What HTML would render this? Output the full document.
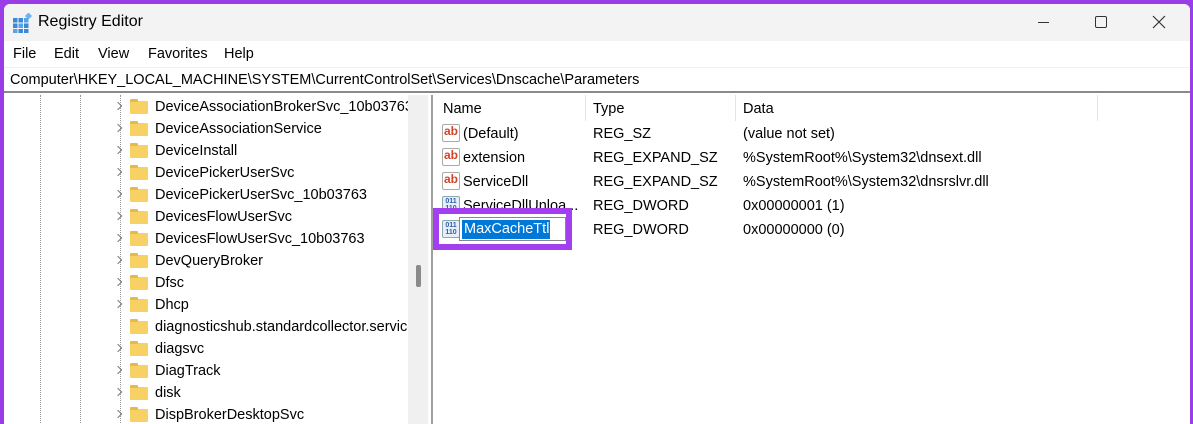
<!DOCTYPE html>
<html><head><style>
*{margin:0;padding:0;box-sizing:border-box}
body{width:1193px;height:417px;overflow:hidden;background:#9b3de6;font-family:"Liberation Sans",sans-serif;font-size:14.5px;color:#000;position:relative}
.win{position:absolute;left:4px;top:4px;width:1186px;height:420px;background:#fff;border-radius:6px 6px 0 0;overflow:hidden}
.title{position:absolute;left:0;top:0;width:100%;height:37px;background:#f3f3f3}
.abs{position:absolute;white-space:nowrap}
.menu{position:absolute;top:37px;left:0;width:100%;height:26px;background:#fff}
.addr{position:absolute;top:63px;left:0;width:100%;height:26px;background:#fff;border-top:1px solid #f0f0f0;border-bottom:2px solid #8a8a8a}
.row{position:absolute;height:22px;line-height:22px;white-space:nowrap}
.fold{position:absolute;left:126px;width:18px;height:13px;background:#f8d164;border-radius:1px}
.fold:before{content:"";position:absolute;left:0;top:-2px;width:8px;height:3px;background:#e8b84a;border-radius:1px 1px 0 0}
.chev{position:absolute;left:111px;width:6px;height:6px;border-right:1.3px solid #777;border-top:1.3px solid #777;transform:rotate(45deg)}
.dot{position:absolute;border-left:1px dotted #999}
.ab{position:absolute;left:438px;width:18px;height:18px;background:#fff;border:1px solid #aaa;border-radius:2px}
.ab span{position:absolute;left:1px;top:-1px;color:#d2452a;font-weight:bold;font-size:12px;line-height:15px}
.bin{position:absolute;left:438px;width:18px;height:18px;background:#e8eef8;border:1px solid #8aa;border-radius:2px;font-size:7px;line-height:7px;color:#2a5fb0;font-weight:bold;text-align:center;padding-top:1px}
</style></head><body>
<div class="win">
<div class="title">
 <svg class="abs" style="left:9px;top:9px" width="20" height="20" viewBox="0 0 20 20">
  <rect x="0" y="5" width="4.5" height="4.5" fill="#3a8ad6"/><rect x="5.5" y="5" width="4.5" height="4.5" fill="#3a8ad6"/><rect x="11" y="5" width="4.5" height="4.5" fill="#5aa3e6"/>
  <rect x="0" y="10.5" width="4.5" height="4.5" fill="#3a8ad6"/><rect x="5.5" y="10.5" width="4.5" height="4.5" fill="#5aa3e6"/><rect x="11" y="10.5" width="4.5" height="4.5" fill="#3a8ad6"/>
  <rect x="0" y="16" width="4.5" height="4" fill="#5aa3e6"/><rect x="5.5" y="16" width="4.5" height="4" fill="#3a8ad6"/><rect x="11" y="16" width="4.5" height="4" fill="#3a8ad6"/>
  <rect x="13" y="0.5" width="5" height="5" fill="#6cb6f0" transform="rotate(45 15.5 3)"/>
 </svg>
 <div class="abs" style="left:34px;top:9px;font-size:16px">Registry Editor</div>
 <div class="abs" style="left:1034px;top:18px;width:11px;height:1px;background:#333"></div>
 <div class="abs" style="left:1091px;top:12px;width:12px;height:12px;border:1.3px solid #333;border-radius:2px"></div>
 <svg class="abs" style="left:1148px;top:11px" width="14" height="14"><path d="M1 1L13 13M13 1L1 13" stroke="#333" stroke-width="1.2"/></svg>
</div>
<div class="menu">
 <div class="abs" style="left:9px;top:5px">File</div>
 <div class="abs" style="left:50px;top:5px">Edit</div>
 <div class="abs" style="left:94px;top:5px">View</div>
 <div class="abs" style="left:144px;top:5px">Favorites</div>
 <div class="abs" style="left:220px;top:5px">Help</div>
</div>
<div class="addr"><div class="abs" style="left:6px;top:4px">Computer\HKEY_LOCAL_MACHINE\SYSTEM\CurrentControlSet\Services\Dnscache\Parameters</div></div>
<div class="abs" style="left:0;top:91px;width:404px;height:330px;overflow:hidden">
 <div class="dot" style="left:36px;top:0;height:330px"></div>
 <div class="dot" style="left:76px;top:0;height:330px"></div>
 <div class="dot" style="left:116px;top:0;height:330px"></div>
</div>
<div class="abs" style="left:404px;top:91px;width:20px;height:330px;background:#f0f0f0"></div>
<div class="abs" style="left:412px;top:261px;width:5px;height:22px;background:#8a8a8a;border-radius:2px"></div>
<div class="abs" style="left:427px;top:91px;width:2px;height:330px;background:#a0a0a0"></div>
<div id="tree"></div>
<div class="abs" style="left:439px;top:97px">Name</div>
<div class="abs" style="left:581px;top:91px;width:1px;height:26px;background:#e5e5e5"></div>
<div class="abs" style="left:589px;top:97px">Type</div>
<div class="abs" style="left:731px;top:91px;width:1px;height:26px;background:#e5e5e5"></div>
<div class="abs" style="left:739px;top:97px">Data</div>
<div class="abs" style="left:1093px;top:91px;width:1px;height:26px;background:#e5e5e5"></div>

<div class="ab" style="top:120px"><span>ab</span></div><div class="abs" style="left:459px;top:122px">(Default)</div><div class="abs" style="left:589px;top:122px">REG_SZ</div><div class="abs" style="left:739px;top:122px">(value not set)</div>
<div class="ab" style="top:144px"><span>ab</span></div><div class="abs" style="left:459px;top:146px">extension</div><div class="abs" style="left:589px;top:146px">REG_EXPAND_SZ</div><div class="abs" style="left:739px;top:146px">%SystemRoot%\System32\dnsext.dll</div>
<div class="ab" style="top:168px"><span>ab</span></div><div class="abs" style="left:459px;top:170px">ServiceDll</div><div class="abs" style="left:589px;top:170px">REG_EXPAND_SZ</div><div class="abs" style="left:739px;top:170px">%SystemRoot%\System32\dnsrslvr.dll</div>
<div class="bin" style="top:192px">011<br>110</div><div class="abs" style="left:459px;top:194px">ServiceDllUnloa...</div><div class="abs" style="left:589px;top:194px">REG_DWORD</div><div class="abs" style="left:739px;top:194px">0x00000001 (1)</div>
<div class="abs" style="left:429px;top:204px;width:139px;height:42px;background:#a43ff0"></div>
<div class="abs" style="left:435px;top:210px;width:127px;height:30px;background:#fff"></div>
<div class="bin" style="top:216px">011<br>110</div>
<div class="abs" style="left:455px;top:213px;width:107px;height:24px;border:1px solid #888;background:#fff"></div>
<div class="abs" style="left:458px;top:216px;width:88px;height:19px;background:#0078d7;color:#fff;line-height:19px;padding-left:2px">MaxCacheTtl</div>
<div class="abs" style="left:589px;top:218px">REG_DWORD</div><div class="abs" style="left:739px;top:218px">0x00000000 (0)</div>
</div>
<script>
var items=["DeviceAssociationBrokerSvc_10b03763","DeviceAssociationService","DeviceInstall","DevicePickerUserSvc","DevicePickerUserSvc_10b03763","DevicesFlowUserSvc","DevicesFlowUserSvc_10b03763","DevQueryBroker","Dfsc","Dhcp","diagnosticshub.standardcollector.service","diagsvc","DiagTrack","disk","DispBrokerDesktopSvc"];
var h="";
items.forEach(function(t,i){var y=91+i*22;
h+='<div class="fold" style="top:'+(y+6)+'px"></div>';
if(i!=10)h+='<div class="chev" style="top:'+(y+8)+'px"></div>';
h+='<div class="row" style="left:151px;top:'+(y+1)+'px;width:253px;overflow:hidden">'+t+'</div>';});
document.getElementById("tree").outerHTML=h;
</script>
</body></html>
